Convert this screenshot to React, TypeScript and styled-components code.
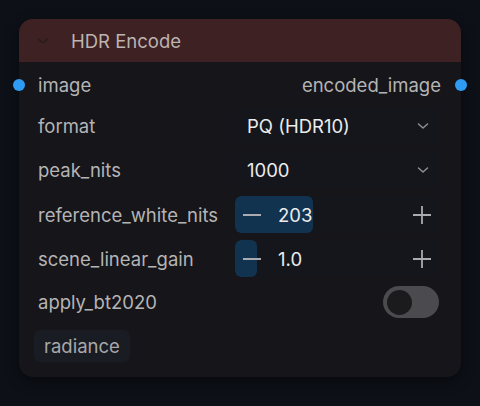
import styled, { createGlobalStyle } from "styled-components";

const GlobalStyle = createGlobalStyle`
  html, body {
    margin: 0;
    padding: 0;
    background: #0d1017;
  }
  body {
    font-family: Inter, "Noto Sans", sans-serif;
  }
`;

const Page = styled.div`
  width: 480px;
  height: 406px;
  padding: 19px 19px 0 19px;
  box-sizing: border-box;
`;

const Card = styled.div`
  position: relative;
  width: 442px;
  background: #161519;
  border-radius: 14px;
  box-shadow: 0 4px 14px rgba(0, 0, 0, 0.45);
`;

const Header = styled.div`
  height: 43px;
  display: flex;
  align-items: center;
  gap: 22px;
  padding: 0 18px;
  background: #3d2123;
  border-radius: 14px 14px 0 0;
  color: #bdb3b1;
  font-size: 18.5px;
`;

const Body = styled.div`
  display: flex;
  flex-direction: column;
  gap: 8px;
  padding: 10px 21px 15px 19px;
`;

const IoRow = styled.div`
  position: relative;
  height: 26px;
  display: flex;
  align-items: center;
  justify-content: space-between;
  margin: 0 -1px 2px 0;
  font-size: 18.5px;
  color: #b4b4b6;
`;

const Dot = styled.span<{ $side: "left" | "right" }>`
  position: absolute;
  top: 50%;
  ${(p) => (p.$side === "left" ? "left: -25px;" : "right: -26px;")}
  width: 12px;
  height: 12px;
  margin-top: -6px;
  border-radius: 50%;
  background: #2f9cf4;
`;

const Row = styled.div`
  height: 36px;
  display: grid;
  grid-template-columns: 197px 205px;
  align-items: center;
`;

const Label = styled.span`
  font-size: 18.5px;
  color: #b4b4b6;
  white-space: nowrap;
`;

const Select = styled.div`
  height: 36px;
  display: flex;
  align-items: center;
  justify-content: space-between;
  padding: 0 11px 0 12px;
  background: #14161c;
  border-radius: 6px;
  color: #ececec;
  font-size: 18.5px;
`;

const NumberBox = styled.div`
  position: relative;
  height: 37px;
  display: flex;
  align-items: center;
  background: #14161c;
  border-radius: 6px;
  overflow: hidden;
  color: #ececec;
  font-size: 18.5px;
`;

const Fill = styled.div`
  position: absolute;
  left: 0;
  top: 0;
  bottom: 0;
  background: #113350;
  border-radius: 6px;
`;

const Step = styled.span<{ $w: number }>`
  position: relative;
  width: ${(p) => p.$w}px;
  display: flex;
  justify-content: center;
  align-items: center;
`;

const Value = styled.span`
  position: relative;
  flex: 1;
  padding-left: 9px;
`;

const ToggleCell = styled.div`
  display: flex;
  justify-content: flex-end;
  padding-right: 1px;
`;

const Toggle = styled.div`
  width: 56px;
  height: 32px;
  box-sizing: border-box;
  padding: 3px 3px 3px 4px;
  border-radius: 16px;
  background: #4b4b4f;
  display: flex;
  align-items: center;
`;

const Knob = styled.div`
  width: 25px;
  height: 25px;
  border-radius: 50%;
  background: #1b1b1d;
`;

const Footer = styled.div`
  display: flex;
  margin-left: -4px;
  margin-top: 2px;
`;

const Chip = styled.span`
  height: 32px;
  display: flex;
  align-items: center;
  padding: 0 10px;
  border-radius: 6px;
  background: #191c22;
  color: #a8a8aa;
  font-size: 18.5px;
`;

const Chevron = ({ color }: { color: string }) => (
  <svg width="12" height="8" viewBox="0 0 12 8" fill="none">
    <path d="M1.5 2 L6 6 L10.5 2" stroke={color} strokeWidth="1.5" strokeLinecap="round" strokeLinejoin="round" />
  </svg>
);

const Minus = () => (
  <svg width="20" height="20" viewBox="0 0 20 20">
    <path d="M1 10 H19" stroke="#a9abb0" strokeWidth="1.8" />
  </svg>
);

const Plus = () => (
  <svg width="20" height="20" viewBox="0 0 20 20">
    <path d="M1 10 H19 M10 1 V19" stroke="#a9abb0" strokeWidth="1.8" />
  </svg>
);

const selects = [
  { label: "format", value: "PQ (HDR10)" },
  { label: "peak_nits", value: "1000" },
];

const numbers = [
  { label: "reference_white_nits", value: "203", fill: 78 },
  { label: "scene_linear_gain", value: "1.0", fill: 22 },
];

export default function App() {
  return (
    <>
      <GlobalStyle />
      <Page>
        <Card>
          <Header>
            <Chevron color="#281b1d" />
            <span>HDR Encode</span>
          </Header>
          <Body>
            <IoRow>
              <Dot $side="left" />
              <span>image</span>
              <span>encoded_image</span>
              <Dot $side="right" />
            </IoRow>
            {selects.map((s) => (
              <Row key={s.label}>
                <Label>{s.label}</Label>
                <Select>
                  <span>{s.value}</span>
                  <Chevron color="#8d9096" />
                </Select>
              </Row>
            ))}
            {numbers.map((n) => (
              <Row key={n.label}>
                <Label>{n.label}</Label>
                <NumberBox>
                  <Fill style={{ width: n.fill }} />
                  <Step $w={34}>
                    <Minus />
                  </Step>
                  <Value>{n.value}</Value>
                  <Step $w={36}>
                    <Plus />
                  </Step>
                </NumberBox>
              </Row>
            ))}
            <Row>
              <Label>apply_bt2020</Label>
              <ToggleCell>
                <Toggle>
                  <Knob />
                </Toggle>
              </ToggleCell>
            </Row>
            <Footer>
              <Chip>radiance</Chip>
            </Footer>
          </Body>
        </Card>
      </Page>
    </>
  );
}
